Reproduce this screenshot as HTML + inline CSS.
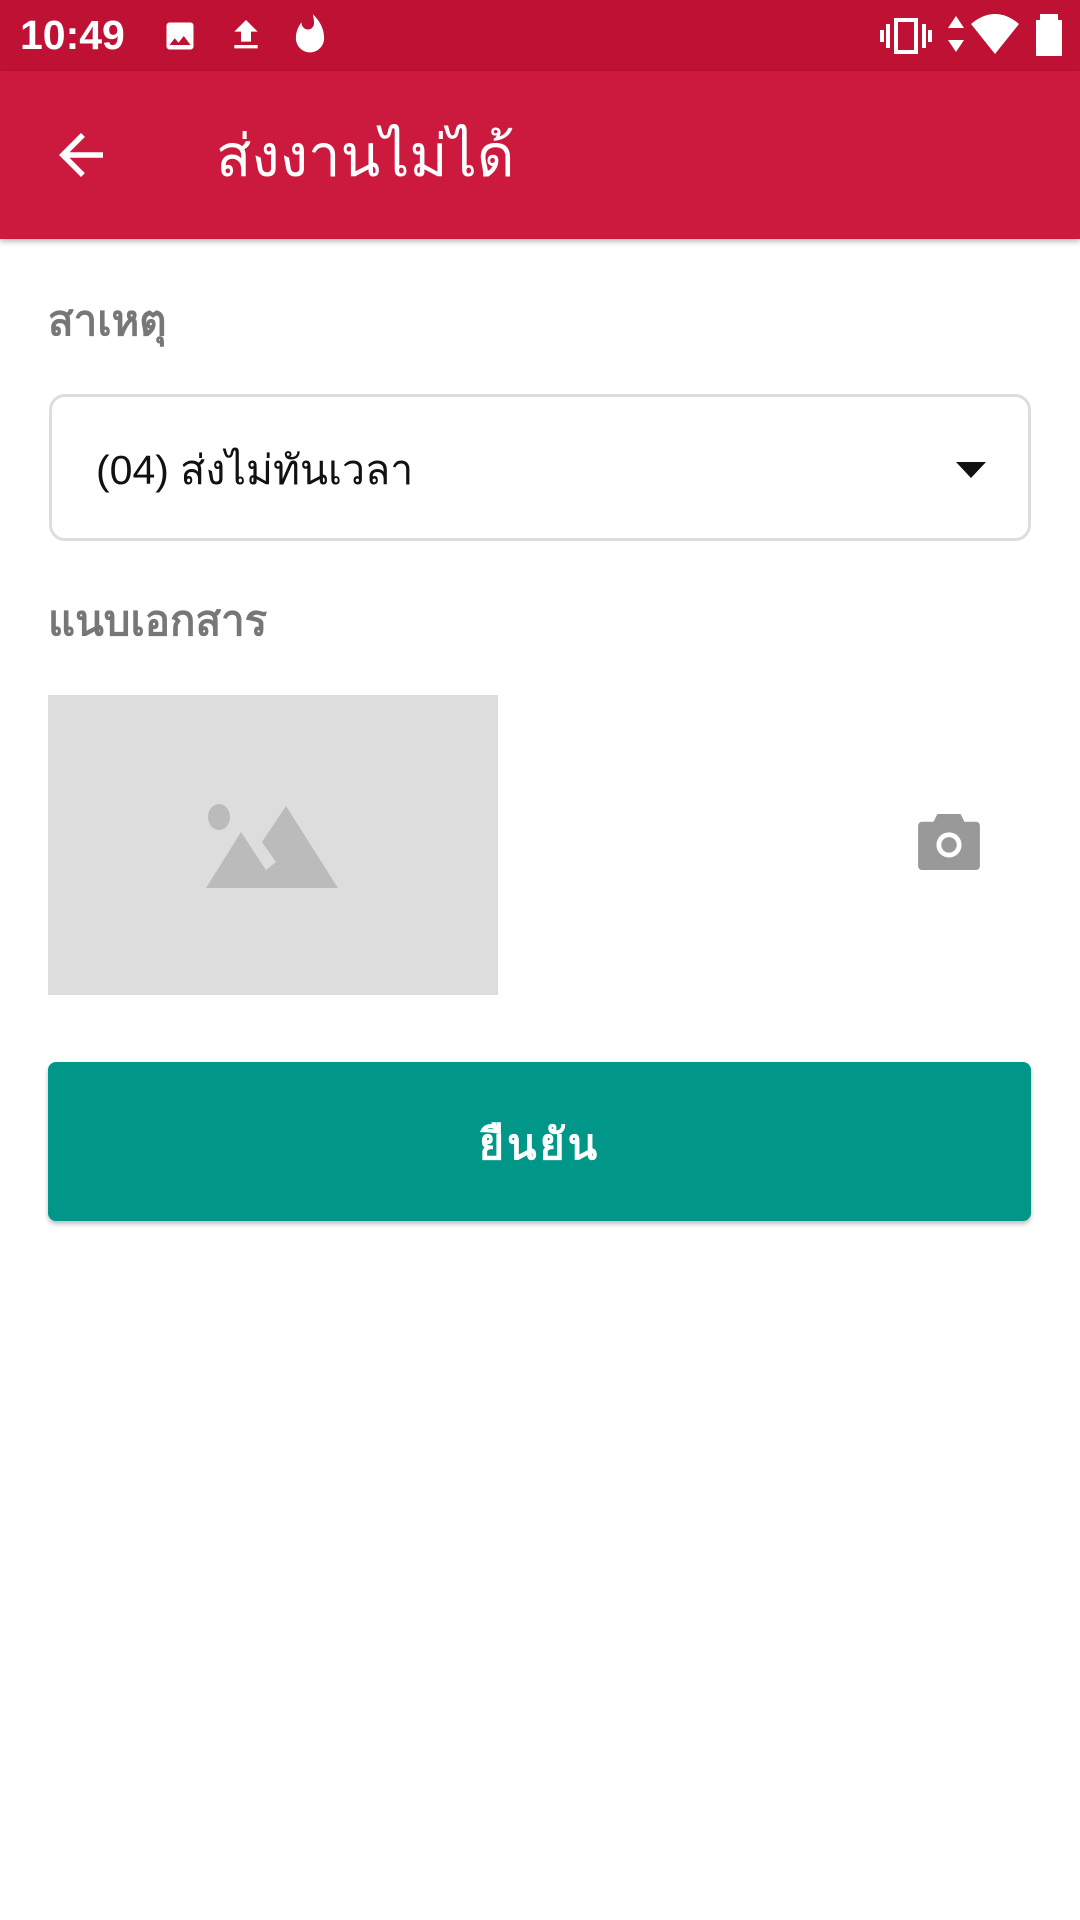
<!DOCTYPE html>
<html><head><meta charset="utf-8">
<style>
*{margin:0;padding:0;box-sizing:border-box}
body{width:1080px;height:1920px;background:#fff;font-family:"Liberation Sans","DejaVu Sans","Noto Sans CJK SC",sans-serif;position:relative;overflow:hidden}
.sb{position:absolute;left:0;top:0;width:1080px;height:71px;background:#BE1133;color:#fff}
.ab{position:absolute;left:0;top:71px;width:1080px;height:168px;background:#CC1A3F;box-shadow:0 3px 5px rgba(0,0,0,.25)}
.abs{position:absolute}
</style></head><body>
<div class="sb">
<div class="abs" style="left:20px;top:12px;font-size:41px;font-weight:bold">10:49</div>
<svg class="abs" style="left:160px;top:18px" width="40" height="36" viewBox="0 0 24 24"><path fill="#fff" d="M21 19V5a2 2 0 0 0-2-2H5a2 2 0 0 0-2 2v14a2 2 0 0 0 2 2h14a2 2 0 0 0 2-2zM8.5 13.5l2.5 3 3.5-4.5 4.5 6H5l3.5-4.5z"/></svg>
<svg class="abs" style="left:226px;top:14px" width="40" height="42" viewBox="0 0 24 24"><path fill="#fff" d="M5 20h14v-2H5v2zm0-10h4v6h6v-6h4l-7-7-7 7z"/></svg>
<svg class="abs" style="left:288px;top:12px" width="44" height="46" viewBox="0 0 24 24"><path fill="#fff" d="M13.5.7s.7 2.6.7 4.7c0 2-1.3 3.6-3.3 3.6S7.4 7.4 7.4 5.4l.03-.36C5.5 7.4 4.3 10.4 4.3 13.7 4.3 18 7.8 21.5 12 21.5s7.7-3.5 7.7-7.8C19.7 8.6 17.2 4 13.5.7z"/></svg>
<svg class="abs" style="left:880px;top:16px" width="52" height="40" viewBox="0 0 26 20"><path fill="#fff" d="M0 7h2v6H0zM3 4h2v12H3zM21 4h2v12h-2zM24 7h2v6h-2zM7 1h12v18H7zM9 3v14h8V3z" fill-rule="evenodd"/></svg>
<svg class="abs" style="left:946px;top:16px" width="20" height="36" viewBox="0 0 10 18"><path fill="#fff" d="M5 0l4 6H1zM5 18l4-6H1z"/></svg>
<svg class="abs" style="left:970px;top:14px" width="50" height="40" viewBox="0 0 24 20"><path fill="#fff" d="M12 20L0 5C3.5 2 7.5 0 12 0s8.5 2 12 5z"/></svg>
<div class="abs" style="left:1040px;top:14px;width:18px;height:6px;background:#fff"></div>
<div class="abs" style="left:1036px;top:20px;width:26px;height:36px;background:#fff"></div>
</div>
<div class="ab">
<svg class="abs" style="left:48px;top:51px" width="66" height="66" viewBox="0 0 24 24"><path fill="#fff" d="M20 11H7.83l5.59-5.59L12 4l-8 8 8 8 1.41-1.41L7.83 13H20v-2z"/></svg>
<div class="abs" style="left:216px;top:38px;font-size:58px;color:#fff">ส่งงานไม่ได้</div>
</div>
<div class="abs" style="left:48px;top:288px;font-size:42px;font-weight:bold;color:#777">สาเหตุ</div>
<div class="abs" style="left:49px;top:394px;width:982px;height:147px;border:3px solid #ddd;border-radius:16px"></div>
<div class="abs" style="left:96px;top:438px;font-size:41px;color:#111">(04) ส่งไม่ทันเวลา</div>
<svg class="abs" style="left:956px;top:462px" width="30" height="16" viewBox="0 0 30 16"><path d="M0 0h30L15 16z" fill="#111"/></svg>
<div class="abs" style="left:48px;top:588px;font-size:42px;font-weight:bold;color:#777">แนบเอกสาร</div>
<div class="abs" style="left:48px;top:695px;width:450px;height:300px;background:#dddddd"></div>
<svg class="abs" style="left:206px;top:802px" width="134" height="86" viewBox="0 0 134 86"><ellipse cx="13" cy="15" rx="11" ry="13" fill="#bbb"/><path d="M0 86L35 30 60 68 70 60 56 40 80 4 132 86z" fill="#bbb"/></svg>
<svg class="abs" style="left:918px;top:814px" width="62" height="56" viewBox="0 0 64 58"><path fill="#999" d="M20 0h24l4 8h12a4 4 0 0 1 4 4v42a4 4 0 0 1-4 4H4a4 4 0 0 1-4-4V12a4 4 0 0 1 4-4h12z"/><circle cx="32" cy="32" r="13" fill="#fff"/><circle cx="32" cy="32" r="8" fill="#999"/></svg>
<div class="abs" style="left:48px;top:1062px;width:983px;height:159px;background:#009688;border-radius:8px;box-shadow:0 3px 5px rgba(0,0,0,.25)"></div>
<div class="abs" style="left:48px;top:1110px;width:983px;text-align:center;font-size:43px;font-weight:bold;color:#fff;letter-spacing:3px">ยืนยัน</div>
</body></html>
